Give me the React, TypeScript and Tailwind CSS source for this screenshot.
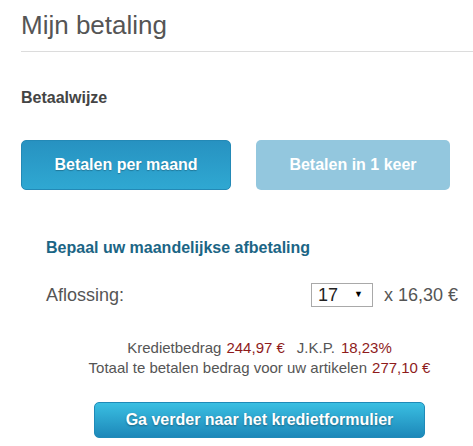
const Betaling = () => {
  return (
    <div className="min-h-[446px] bg-white pl-[21px] font-['Liberation_Sans',Arial,sans-serif]">
      <div className="border-b border-[#dcdcdc] pt-[10px] pb-[11px]">
        <h1 className="text-[26px] leading-[30px] text-[#555555]">Mijn betaling</h1>
      </div>

      <h2 className="mt-[36px] text-[16px] leading-[20px] font-bold text-[#444444]">
        Betaalwijze
      </h2>

      <div className="mt-[32px] flex items-center">
        <button className="w-[210px] h-[50px] rounded-[5px] border border-[#2389b6] bg-gradient-to-b from-[#2792c1] to-[#2fa8d2] text-[16px] font-bold text-white [text-shadow:0_1px_1px_rgba(0,0,0,0.25)]">
          Betalen per maand
        </button>
        <button className="ml-[25px] w-[194px] h-[50px] rounded-[5px] bg-[#93c7de] text-[16px] font-bold text-white">
          Betalen in 1 keer
        </button>
      </div>

      <div className="pl-[25px]">
        <h3 className="mt-[48px] text-[16px] leading-[20px] font-bold text-[#1b6585]">
          Bepaal uw maandelijkse afbetaling
        </h3>

        <div className="mt-[25px] mr-[15px] flex items-center h-[24px]">
          <span className="text-[18px] leading-[24px] text-[#555555]">Aflossing:</span>
          <div className="ml-auto flex items-center">
            <div className="w-[62px] h-[24px] border border-[#a9a9a9] bg-white flex items-center pl-[6px] pr-[9px]">
              <span className="text-[18px] leading-[22px] text-[#222222]">17</span>
              <span className="ml-auto text-[9px] text-black">▼</span>
            </div>
            <span className="ml-[11px] text-[18px] leading-[24px] text-[#555555]">x 16,30 €</span>
          </div>
        </div>

        <div className="mt-[31px] text-center text-[15px] leading-[20px] text-[#555555]">
          <p>
            Kredietbedrag<span className="ml-[5px] text-[#8e1b1b]">244,97 €</span>
            <span className="ml-[12px]">J.K.P.</span>
            <span className="ml-[6px] text-[#8e1b1b]">18,23%</span>
          </p>
          <p>
            Totaal te betalen bedrag voor uw artikelen
            <span className="ml-[5px] text-[#8e1b1b]">277,10 €</span>
          </p>
        </div>

        <div className="mt-[24px] flex justify-center">
          <button className="w-[331px] h-[36px] rounded-[5px] border border-[#1f8ab8] bg-gradient-to-b from-[#3abfe2] to-[#1d88b9] text-[16px] font-bold text-white [text-shadow:0_1px_2px_rgba(0,0,0,0.35)]">
            Ga verder naar het kredietformulier
          </button>
        </div>
      </div>
    </div>
  );
};

export default function App() {
  return <Betaling />;
}
